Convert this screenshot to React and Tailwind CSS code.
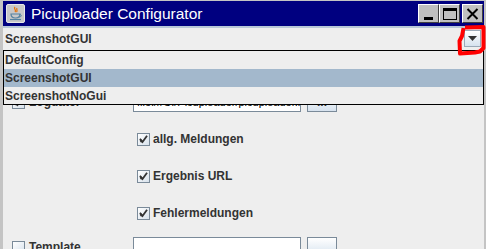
import React from "react";

const font = { fontFamily: '"Liberation Sans", Arial, sans-serif' };

function Check({ checked }) {
  return (
    <div className="w-[13px] h-[13px] border border-[#7a8a99] bg-gradient-to-br from-white to-[#d8e2ec] flex items-center justify-center shrink-0">
      {checked && (
        <svg width="9" height="9" viewBox="0 0 9 9">
          <path d="M1.5 4.5 L3.5 7 L7.5 1.5" stroke="#333" strokeWidth="1.8" fill="none" strokeLinecap="square" />
          <path d="M1.5 5 L3 7" stroke="#333" strokeWidth="2.4" fill="none" />
        </svg>
      )}
    </div>
  );
}

function TitleButton({ children }) {
  return (
    <div className="w-[21px] h-[19px] bg-[#c0c0c0] border-t border-l border-t-white border-l-white border-r border-b border-r-[#404040] border-b-[#404040] flex items-center justify-center">
      {children}
    </div>
  );
}

export default function App() {
  return (
    <div className="relative w-[486px] h-[249px] overflow-hidden bg-[#c4c4c4] pt-px pl-[3px] pr-[2px] text-[#333333]" style={font}>
      {/* Title bar */}
      <div className="h-[25px] bg-[#000080] flex items-center pl-[3px] pr-px">
        <div className="w-[19px] h-[19px] bg-[#c8c8c8] rounded-[2px] border border-[#e8e8e8] flex items-center justify-center">
          <svg width="15" height="15" viewBox="0 0 15 15">
            <path d="M7 1 C5 3 9 4 7 6 M9 2 C8 3.5 10 4.5 8.5 6" stroke="#e76f00" strokeWidth="1.2" fill="none" />
            <path d="M3 8 C3 11 5 12 7.5 12 C10 12 12 11 12 8 Z" fill="none" stroke="#5382a1" strokeWidth="1.2" />
            <path d="M11.5 8.5 C14 8.5 14 11 11 11" stroke="#5382a1" strokeWidth="1" fill="none" />
            <path d="M2 13.5 L13 13.5" stroke="#5382a1" strokeWidth="1.2" />
          </svg>
        </div>
        <span className="ml-[6px] text-white text-[15.5px] leading-none mt-px">Picuploader Configurator</span>
        <div className="ml-auto flex items-center">
          <TitleButton>
            <div className="w-[9px] h-[3px] bg-black mt-[9px]" />
          </TitleButton>
          <TitleButton>
            <div className="w-[14px] h-[12px] border border-black border-t-[3px]" />
          </TitleButton>
          <div className="w-[2px]" />
          <TitleButton>
            <svg width="13" height="12" viewBox="0 0 13 12">
              <path d="M1.5 1 L11.5 11 M11.5 1 L1.5 11" stroke="black" strokeWidth="2" />
            </svg>
          </TitleButton>
        </div>
      </div>
      <div className="h-[2px] bg-[#b8c8d8]" />
      {/* Combo box */}
      <div className="h-[21px] bg-[#eeeeee] flex items-center pl-[2px] pr-[3px]">
        <span className="text-[12px] font-bold">ScreenshotGUI</span>
        <div className="ml-auto w-[17px] h-[17px] border border-[#9aa9b8] bg-gradient-to-b from-white to-[#d6e2ee] flex items-center justify-center">
          <svg width="9" height="5" viewBox="0 0 9 5">
            <path d="M0 0 L9 0 L4.5 5 Z" fill="#333" />
          </svg>
        </div>
      </div>
      {/* Content */}
      <div className="bg-[#eeeeee] h-[200px] text-[12px] font-bold">
        <div className="pt-[43px] flex items-center h-[63px] pl-[9px]">
          <div className="w-[121px] flex items-center gap-[4px]">
            <Check checked />
            <span>Logdatei</span>
          </div>
          <div className="w-[168px] h-[20px] bg-white border border-[#7a8a99] flex items-center px-[3px] text-[11px] font-normal text-black overflow-hidden whitespace-nowrap">
            file:///C:/Picuploader/picuploader.log
          </div>
          <div className="ml-[6px] w-[30px] h-[20px] border border-[#7a8a99] bg-gradient-to-b from-white to-[#d6e2ee] flex items-center justify-center">...</div>
        </div>
        <div className="mt-[17px] h-[20px] flex items-center gap-[3px] pl-[134px]">
          <Check checked />
          <span>allg. Meldungen</span>
        </div>
        <div className="mt-[17px] h-[20px] flex items-center gap-[3px] pl-[134px]">
          <Check checked />
          <span>Ergebnis URL</span>
        </div>
        <div className="mt-[17px] h-[20px] flex items-center gap-[3px] pl-[134px]">
          <Check checked />
          <span>Fehlermeldungen</span>
        </div>
        <div className="mt-[14px] flex items-start h-[20px] pl-[9px]">
          <div className="w-[121px] flex items-center gap-[4px] pt-px">
            <Check />
            <span>Template</span>
          </div>
          <div className="w-[168px] h-[20px] bg-white border border-[#7a8a99]" />
          <div className="ml-[6px] w-[30px] h-[20px] border border-[#7a8a99] bg-gradient-to-b from-white to-[#d6e2ee]" />
        </div>
      </div>

      {/* Dropdown list popup */}
      <div className="absolute left-[3px] top-[50px] w-[481px] h-[55px] border border-black bg-[#eeeeee] text-[12px] font-bold flex flex-col">
        <div className="h-[18px] flex items-center pl-px">DefaultConfig</div>
        <div className="h-[18px] flex items-center pl-px bg-[#a3b8cc]">ScreenshotGUI</div>
        <div className="h-[17px] flex items-center pl-px">ScreenshotNoGui</div>
      </div>

      {/* Red annotation */}
      <svg className="absolute left-[455px] top-[23px]" width="31" height="33" viewBox="0 0 31 33">
        <path d="M10 4.5 L28.5 4 L28.5 25 L25 28.5 L20 29.5 L5 30.5 L4.5 18 L7 13 L8.5 5" stroke="#ff0000" strokeWidth="4" fill="none" strokeLinejoin="round" />
      </svg>
    </div>
  );
}
